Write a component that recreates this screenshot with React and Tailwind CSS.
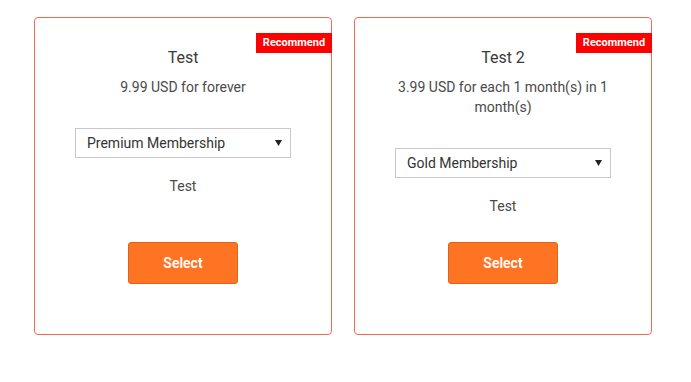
import React from 'react'

const plans = [
  { name: 'Test', price: '9.99 USD for forever', option: 'Premium Membership', desc: 'Test' },
  { name: 'Test 2', price: '3.99 USD for each 1 month(s) in 1 month(s)', option: 'Gold Membership', desc: 'Test' },
]

function PlanCard({ plan }) {
  return (
    <div className="relative w-[298px] h-[318px] border border-[#ee6b4d] rounded-[4px] bg-white flex flex-col items-center pt-[30px] pb-[50px]">
      <div className="absolute top-[15px] right-[-1px] w-[76px] h-[20px] bg-[#ff0000] text-white text-[11px] font-bold leading-[20px] text-center">
        Recommend
      </div>
      <h3 className="text-[16px] leading-[20px] text-[#3a3a3a]">{plan.name}</h3>
      <p className="mt-[9px] w-[240px] text-[14px] leading-[20px] text-[#4a4a4a] text-center">{plan.price}</p>
      <div className="mt-[31px] w-[216px] h-[30px] border border-[#c8c8c8] flex items-center justify-between pl-[11px] pr-[8px] text-[14px] text-[#333]">
        <span>{plan.option}</span>
        <svg width="7" height="6" viewBox="0 0 7 6">
          <path d="M0 0h7L3.5 6z" fill="#222" />
        </svg>
      </div>
      <p className="mt-[18px] text-[14px] leading-[20px] text-[#4a4a4a]">{plan.desc}</p>
      <button className="mt-auto w-[110px] h-[42px] rounded-[3px] bg-[#ff7422] border border-[#e2621b] text-white text-[14px] font-semibold">
        Select
      </button>
    </div>
  )
}

export default function App() {
  return (
    <div className="w-[691px] h-[382px] bg-white pt-[17px] pl-[34px] flex gap-[22px]" style={{ fontFamily: 'Roboto, "Liberation Sans", sans-serif' }}>
      {plans.map(p => (
        <PlanCard key={p.name} plan={p} />
      ))}
    </div>
  )
}
